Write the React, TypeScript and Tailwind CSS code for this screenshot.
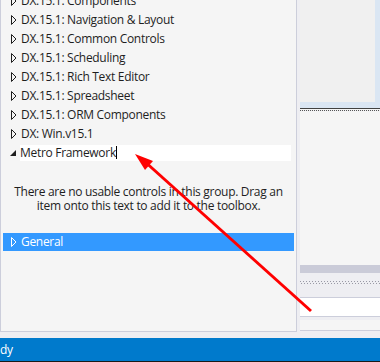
const GROUPS = [
  "DX.15.1: Components",
  "DX.15.1: Navigation & Layout",
  "DX.15.1: Common Controls",
  "DX.15.1: Scheduling",
  "DX.15.1: Rich Text Editor",
  "DX.15.1: Spreadsheet",
  "DX.15.1: ORM Components",
  "DX: Win.v15.1",
];

function Collapsed({ color = "#1e1e1e" }: { color?: string }) {
  return (
    <svg width="6" height="10" viewBox="0 0 6 10" className="shrink-0">
      <polygon points="0.5,0.5 5,5 0.5,9.5" fill="none" stroke={color} strokeWidth="1" />
    </svg>
  );
}

function Expanded() {
  return (
    <svg width="6" height="10" viewBox="0 0 6 10" className="shrink-0">
      <polygon points="6,2 6,8 0,8" fill="#1e1e1e" />
    </svg>
  );
}

const dots = "bg-[repeating-linear-gradient(90deg,#555_0_1px,transparent_1px_2px)]";
const grip = "bg-[repeating-linear-gradient(90deg,#9a9aa6_0_1px,transparent_1px_3px)]";

export default function App() {
  return (
    <div
      className="relative w-[380px] h-[362px] overflow-hidden flex flex-col bg-[#eeeef2] text-[12px] tracking-[-0.3px] text-[#1e1e1e]"
      style={{ fontFamily: '"Open Sans", "Noto Sans", sans-serif' }}
    >
      <div className="flex h-[338px]">
        {/* toolbox */}
        <div className="w-[297px] h-[332px] border border-t-0 border-[#cccedb] bg-[#f5f5f5] overflow-hidden">
          <ul className="mt-[-9px]">
            {GROUPS.map((g) => (
              <li key={g} className="flex items-center h-[19px] pl-[10px] gap-[4px]">
                <Collapsed />
                <span className="leading-none">{g}</span>
              </li>
            ))}
            <li className="flex items-center h-[19px] pl-[9px] gap-[4px]">
              <Expanded />
              <span className="flex items-center flex-1 h-[16px] mr-[5px] bg-white leading-none">
                Metro Framework
                <span className="w-[1px] h-[13px] bg-black" />
              </span>
            </li>
          </ul>
          <p className="mt-[23px] text-center leading-[14px] whitespace-nowrap">
            There are no usable controls in this group. Drag an
            <br />
            item onto this text to add it to the toolbox.
          </p>
          <div className="mt-[20px] mx-[2px] h-[18px] bg-[#3399ff] text-white flex items-center pl-[8px] gap-[4px]">
            <Collapsed color="#ffffff" />
            <span className="leading-none">General</span>
          </div>
        </div>

        {/* right side */}
        <div className="flex-1 pl-[3px] flex flex-col">
          <div className="h-[108px] bg-[#dae6f3] pr-[5px] pb-[6px]">
            <div className="h-full bg-[#f0f0f0]" />
          </div>
          <div className="h-[1px] bg-[#424242]" />
          <div className="h-[1px] bg-[#f5f5f5]" />
          <div className={`h-[1px] ${dots}`} />
          <div className="h-[154px] bg-[#f5f5f5]" />
          <div className="h-[8px] bg-[#cacbd8]" />
          <div className="h-[8px]" />
          <div className={`h-[1px] ${grip}`} />
          <div className="h-[1px]" />
          <div className={`h-[1px] ${grip} ml-[1px]`} />
          <div className="h-[13px]" />
          <div className="h-[20px] bg-white border-y border-[#cccedb]" />
          <div className="h-[3px]" />
          <div className="h-[11px] bg-[#f5f5f5] border-b border-[#cccedb]" />
        </div>
      </div>

      {/* status bar */}
      <div className="h-[23px] bg-[#007acc] text-white flex items-center">
        <span className="leading-none">dy</span>
      </div>
      <div className="h-[1px] bg-[#1a1a1a]" />

      {/* annotation arrow */}
      <svg className="absolute inset-0 pointer-events-none" width="380" height="362">
        <line x1="143" y1="160" x2="311" y2="311" stroke="#ff0000" strokeWidth="3" />
        <polygon points="135,154 153,161 145,170" fill="#ff0000" />
      </svg>
    </div>
  );
}
